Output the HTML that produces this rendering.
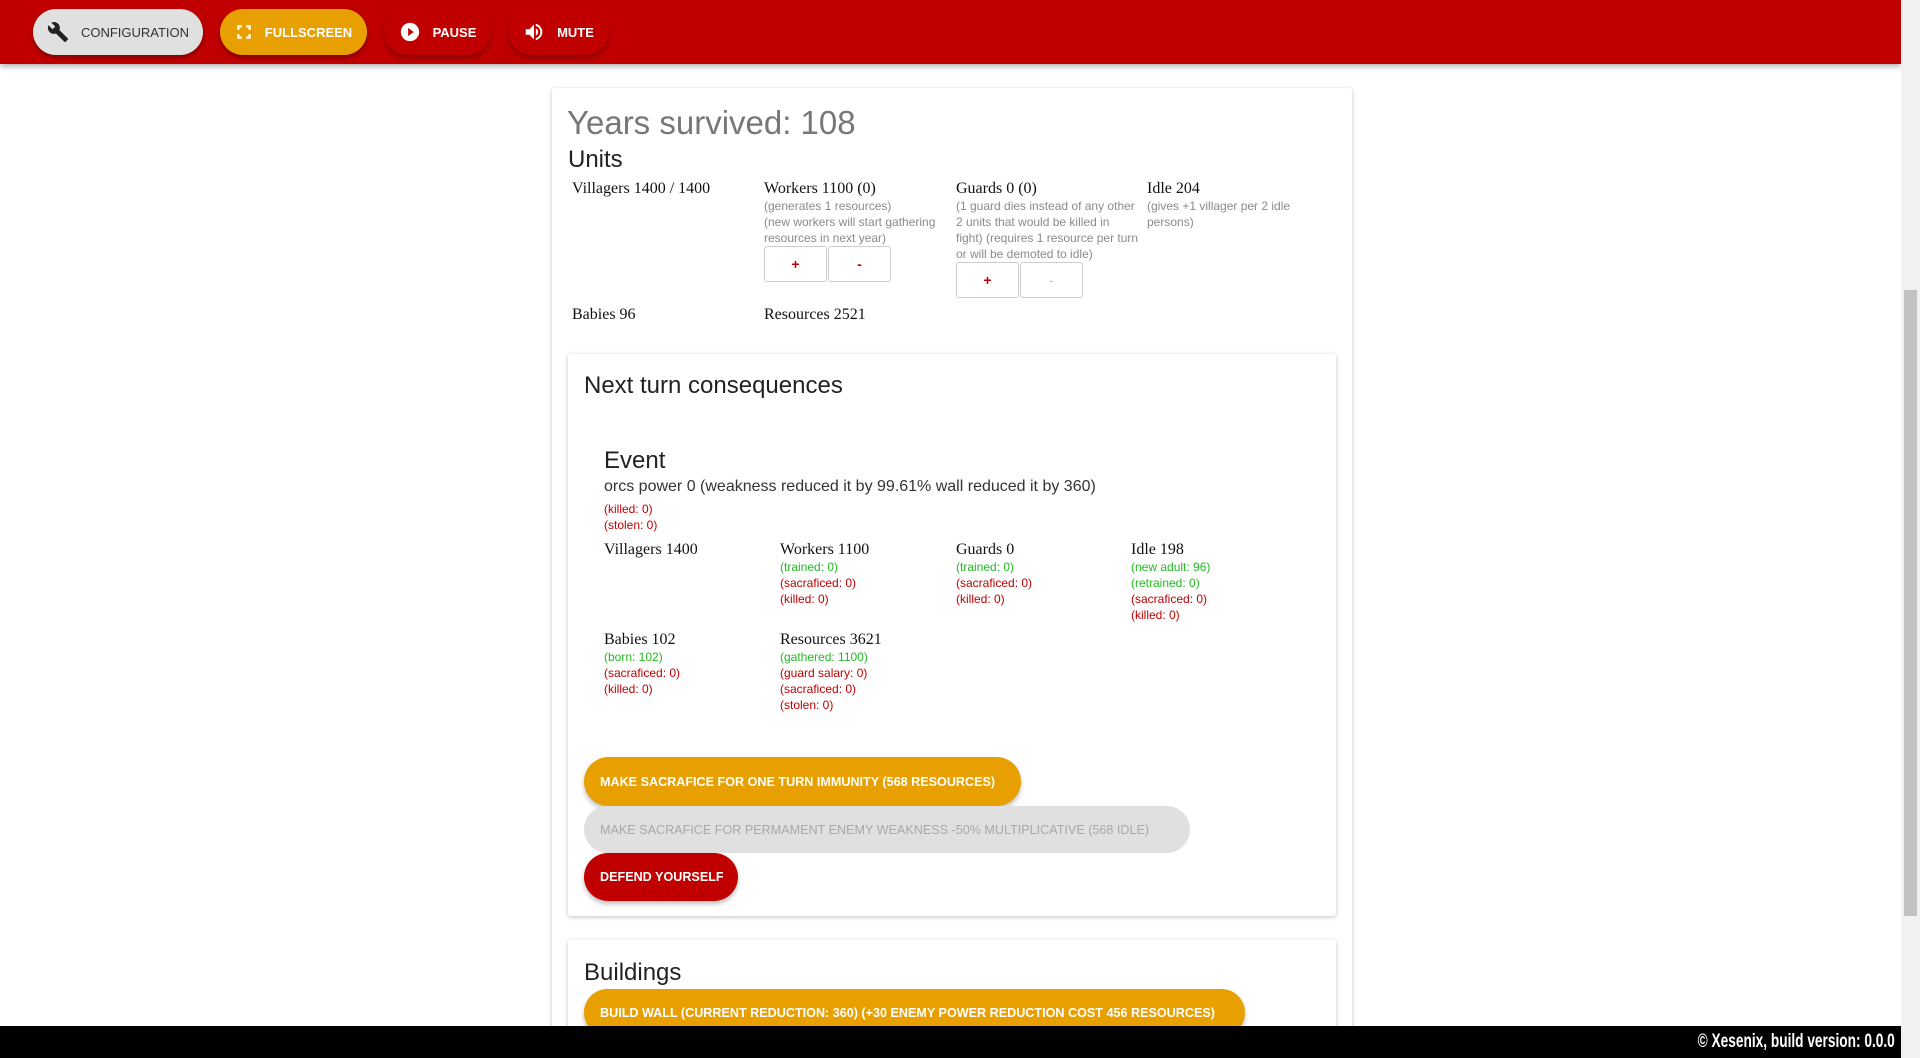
<!DOCTYPE html>
<html style="overflow:hidden;height:1058px"><head><meta charset="utf-8"><style>
*{box-sizing:border-box}
html,body{overflow:hidden}
body{margin:0;width:1920px;height:1058px;background:#fff;font-family:"Liberation Sans",sans-serif;position:relative}
.hdr{position:absolute;left:0;top:0;width:1901px;height:64px;background:#c00000;box-shadow:0 2px 6px rgba(0,0,0,.35)}
.btn{position:absolute;border-radius:24px;display:flex;align-items:center;justify-content:center;font-size:13px;font-weight:bold;box-shadow:0 3px 5px rgba(0,0,0,.3);white-space:nowrap}
.btn svg{margin-right:12px}
.sb{position:absolute;right:0;top:0;width:19px;height:1058px;background:#f1f1f1}
.thumb{position:absolute;right:3px;top:290px;width:13px;height:626px;background:#c1c1c1}
.card{position:absolute;background:#fff;box-shadow:0 1px 4px rgba(0,0,0,.25);border-radius:3px}
.a{position:absolute;white-space:nowrap}
.s{font-family:"Liberation Serif",serif;font-size:16px;color:#111}
.g{font-size:12px;color:#8a8a8a;line-height:16px;white-space:normal}
.r{color:#c00000}.gr{color:#22bb22}
.sm{font-size:12px;line-height:16px}
.pm{position:absolute;width:63px;height:36px;border:1px solid #ccc;border-radius:3px;display:flex;align-items:center;justify-content:center;font-size:14px;font-weight:bold;color:#c00000;background:#fff}
.pill{position:absolute;left:584px;border-radius:25px;display:flex;align-items:center;padding-left:16px;font-size:12.6px;font-weight:bold;color:#fff;box-shadow:0 3px 5px rgba(0,0,0,.25);white-space:nowrap}
.foot{position:absolute;left:0;top:1026px;width:1901px;height:32px;background:#000;color:#fff;text-align:right;font-weight:bold;font-size:19px;line-height:32px;padding-right:6px;overflow:hidden}
</style></head><body>
<div class="card" style="left:552px;top:88px;width:800px;height:970px"></div>
<div class="hdr">
<div class="btn" style="left:33px;top:9px;width:170px;height:46px;background:#e0e0e0;color:#333;font-weight:normal"><svg width="22" height="22" viewBox="0 0 24 24"><path fill="#222" d="M22.7 19l-9.1-9.1c.9-2.3.4-5-1.5-6.9-2-2-5-2.4-7.4-1.3L9 6 6 9 1.6 4.7C.4 7.1.9 10.1 2.9 12.1c1.9 1.9 4.6 2.4 6.9 1.5l9.1 9.1c.4.4 1 .4 1.4 0l2.3-2.3c.5-.4.5-1.1.1-1.4z"/></svg>CONFIGURATION</div>
<div class="btn" style="left:220px;top:9px;width:147px;height:46px;background:#e8a000;color:#fff"><svg width="18" height="18" viewBox="0 0 24 24"><path fill="#fff" d="M3 3h6v3H6v3H3zM15 3h6v6h-3V6h-3zM3 15h3v3h3v3H3zM18 15h3v6h-6v-3h3z"/></svg>FULLSCREEN</div>
<div class="btn" style="left:384px;top:9px;width:107px;height:46px;background:#c00000;color:#fff"><svg width="22" height="22" viewBox="0 0 24 24"><circle cx="12" cy="12" r="10" fill="#fff"/><path fill="#c00000" d="M10 7.5l6 4.5-6 4.5z"/></svg>PAUSE</div>
<div class="btn" style="left:508px;top:9px;width:101px;height:46px;background:#c00000;color:#fff"><svg width="22" height="22" viewBox="0 0 24 24"><path fill="#fff" d="M3 9v6h4l5 5V4L7 9zM16.5 12A4.5 4.5 0 0014 8v8a4.5 4.5 0 002.5-4zM14 3.2v2.1a7 7 0 010 13.4v2.1a9 9 0 000-17.6z"/></svg>MUTE</div>
</div>

<div class="a" style="left:567px;top:104px;font-size:33px;color:#777">Years survived: 108</div>
<div class="a" style="left:568px;top:146px;font-size:24px;color:#222">Units</div>

<div class="a s" style="left:572px;top:180px">Villagers 1400 / 1400</div>
<div class="a s" style="left:764px;top:180px">Workers 1100 (0)</div>
<div class="a g" style="left:764px;top:198px;width:190px">(generates 1 resources)<br>(new workers will start gathering resources in next year)</div>
<div class="pm" style="left:764px;top:246px">+</div><div class="pm" style="left:828px;top:246px">-</div>
<div class="a s" style="left:956px;top:180px">Guards 0 (0)</div>
<div class="a g" style="left:956px;top:198px;width:190px">(1 guard dies instead of any other<br>2 units that would be killed in<br>fight) (requires 1 resource per turn<br>or will be demoted to idle)</div>
<div class="pm" style="left:956px;top:262px">+</div><div class="pm" style="left:1020px;top:262px;color:#bbb;font-weight:normal">-</div>
<div class="a s" style="left:1147px;top:180px">Idle 204</div>
<div class="a g" style="left:1147px;top:198px;width:160px">(gives +1 villager per 2 idle persons)</div>
<div class="a s" style="left:572px;top:306px">Babies 96</div>
<div class="a s" style="left:764px;top:306px">Resources 2521</div>

<div class="card" style="left:568px;top:354px;width:768px;height:562px"></div>
<div class="a" style="left:584px;top:372px;font-size:24px;color:#222">Next turn consequences</div>
<div class="a" style="left:604px;top:447px;font-size:24px;color:#222">Event</div>
<div class="a" style="left:604px;top:478px;font-size:16px;color:#333">orcs power 0 (weakness reduced it by 99.61% wall reduced it by 360)</div>
<div class="a sm r" style="left:604px;top:501px">(killed: 0)<br>(stolen: 0)</div>

<div class="a s" style="left:604px;top:541px">Villagers 1400</div>
<div class="a s" style="left:780px;top:541px">Workers 1100</div>
<div class="a sm" style="left:780px;top:559px"><span class="gr">(trained: 0)</span><br><span class="r">(sacraficed: 0)</span><br><span class="r">(killed: 0)</span></div>
<div class="a s" style="left:956px;top:541px">Guards 0</div>
<div class="a sm" style="left:956px;top:559px"><span class="gr">(trained: 0)</span><br><span class="r">(sacraficed: 0)</span><br><span class="r">(killed: 0)</span></div>
<div class="a s" style="left:1131px;top:541px">Idle 198</div>
<div class="a sm" style="left:1131px;top:559px"><span class="gr">(new adult: 96)</span><br><span class="gr">(retrained: 0)</span><br><span class="r">(sacraficed: 0)</span><br><span class="r">(killed: 0)</span></div>
<div class="a s" style="left:604px;top:631px">Babies 102</div>
<div class="a sm" style="left:604px;top:649px"><span class="gr">(born: 102)</span><br><span class="r">(sacraficed: 0)</span><br><span class="r">(killed: 0)</span></div>
<div class="a s" style="left:780px;top:631px">Resources 3621</div>
<div class="a sm" style="left:780px;top:649px"><span class="gr">(gathered: 1100)</span><br><span class="r">(guard salary: 0)</span><br><span class="r">(sacraficed: 0)</span><br><span class="r">(stolen: 0)</span></div>

<div class="pill" style="top:757px;width:437px;height:49px;background:#e8a000">MAKE SACRAFICE FOR ONE TURN IMMUNITY (568 RESOURCES)</div>
<div class="pill" style="top:806px;width:606px;height:47px;background:#e0e0e0;color:#a8a8a8;font-weight:normal;box-shadow:none">MAKE SACRAFICE FOR PERMAMENT ENEMY WEAKNESS -50% MULTIPLICATIVE (568 IDLE)</div>
<div class="pill" style="top:853px;width:154px;height:48px;background:#c00000">DEFEND YOURSELF</div>

<div class="card" style="left:568px;top:940px;width:768px;height:118px"></div>
<div class="a" style="left:584px;top:959px;font-size:24px;color:#222">Buildings</div>
<div class="pill" style="top:989px;width:661px;height:47px;background:#e8a000">BUILD WALL (CURRENT REDUCTION: 360) (+30 ENEMY POWER REDUCTION COST 456 RESOURCES)</div>

<div class="foot"><span style="display:inline-block;transform:scaleX(.72);transform-origin:right">© Xesenix, build version: 0.0.0</span></div>
<div class="sb"><div class="thumb"></div></div>
</body></html>
